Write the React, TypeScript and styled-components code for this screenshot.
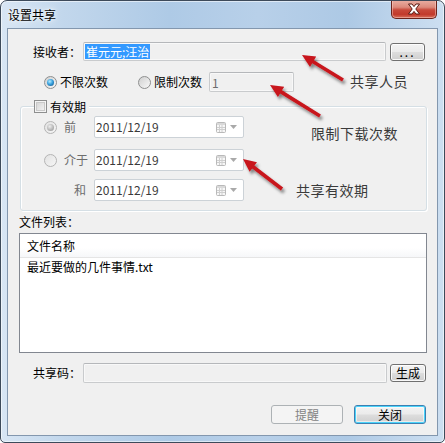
import React from "react";
import styled, { createGlobalStyle, css } from "styled-components";

const Global = createGlobalStyle`
  html, body { margin: 0; padding: 0; background: #ffffff; }
  body {
    font-family: "Noto Sans CJK SC", "Liberation Sans", sans-serif;
    font-size: 12px;
    color: #000;
  }
  * { box-sizing: border-box; }
`;

const Window = styled.div`
  position: relative;
  width: 445px;
  height: 443px;
  border: 1px solid #3d4a5a;
  border-radius: 7px 7px 5px 5px;
  background: linear-gradient(
    90deg,
    #d8e6f4 0%,
    #c2d7ec 14%,
    #aecae6 38%,
    #b8d0e9 58%,
    #adc9e5 78%,
    #cddff1 100%
  );
  box-shadow: inset 0 0 0 1px rgba(255, 255, 255, 0.55);
  padding: 0 6px 6px 6px;
  display: flex;
  flex-direction: column;
  overflow: hidden;
`;

const TitleBar = styled.div`
  height: 27px;
  flex-shrink: 0;
  display: flex;
  justify-content: space-between;
  align-items: flex-start;
`;

const TitleText = styled.span`
  margin: 7px 0 0 1px;
  font-size: 12px;
  line-height: 14px;
  color: #000;
  text-shadow: 0 0 6px rgba(255, 255, 255, 0.95), 0 0 3px rgba(255, 255, 255, 0.9);
`;

const CloseButton = styled.div`
  width: 46px;
  height: 19px;
  margin: -1px 1px 0 0;
  border: 1px solid #6b241c;
  border-top: none;
  border-radius: 0 0 5px 5px;
  background: linear-gradient(
    #eab0a4 0%,
    #dc8a7c 40%,
    #c8493a 55%,
    #c23a2b 80%,
    #d8705c 100%
  );
  box-shadow: inset 0 0 0 1px rgba(255, 220, 210, 0.45);
  display: flex;
  align-items: center;
  justify-content: center;
`;

const Client = styled.div`
  flex: 1;
  border: 1px solid #8397ae;
  background: #f0f0f0;
  display: flex;
  flex-direction: column;
`;

const FieldRow = styled.div<{ $mt: number; $pl: number }>`
  display: flex;
  align-items: center;
  margin-top: ${(p) => p.$mt}px;
  padding-left: ${(p) => p.$pl}px;
`;

const FieldLabel = styled.span`
  width: 50px;
  flex-shrink: 0;
  line-height: 14px;
`;

const TextBox = styled.div<{ $w: number; $h: number }>`
  width: ${(p) => p.$w}px;
  height: ${(p) => p.$h}px;
  flex-shrink: 0;
  border: 1px solid #c9cbcd;
  border-top-color: #b5b7ba;
  border-radius: 2px;
  background: #f0f0f0;
  display: flex;
  align-items: center;
  padding-left: 1px;
  color: #6d6d6d;
  line-height: 15px;
  box-shadow: inset 0 0 0 1px rgba(255, 255, 255, 0.5);
`;

const Selection = styled.span`
  background: #3399ff;
  color: #ffffff;
  padding: 0 1px 0 1px;
  line-height: 15px;
`;

const Btn = styled.button<{ $w: number; $h: number; $default?: boolean; $spaced?: boolean }>`
  width: ${(p) => p.$w}px;
  height: ${(p) => p.$h}px;
  flex-shrink: 0;
  padding: 0;
  font-family: inherit;
  font-size: 12px;
  line-height: 14px;
  letter-spacing: ${(p) => (p.$spaced ? "2px" : "0")};
  color: #000;
  border: 1px solid #707070;
  border-radius: 3px;
  background: linear-gradient(#f3f3f3 0%, #ebebeb 48%, #dddddd 52%, #cfcfcf 100%);
  box-shadow: inset 0 0 0 1px rgba(255, 255, 255, 0.85);
  display: flex;
  align-items: center;
  justify-content: center;
  ${(p) =>
    p.$default &&
    css`
      border-color: #3c7fb1;
      box-shadow: inset 0 0 0 1px #4ad3fa, inset 0 0 0 2px rgba(255, 255, 255, 0.55);
    `}
  &:disabled {
    border-color: #adb2b5;
    background: #f4f4f4;
    color: #838383;
    box-shadow: none;
  }
`;

const RadioItem = styled.label<{ $disabled?: boolean }>`
  display: flex;
  align-items: center;
  gap: 3px;
  line-height: 14px;
  color: ${(p) => (p.$disabled ? "#6d6d6d" : "#000")};
`;

const RadioDot = styled.span<{ $checked?: boolean; $disabled?: boolean }>`
  width: 13px;
  height: 13px;
  flex-shrink: 0;
  border-radius: 50%;
  border: 1px solid ${(p) => (p.$disabled ? "#b4b4b4" : "#8e8f8f")};
  background: ${(p) =>
    p.$disabled
      ? "linear-gradient(135deg, #e2e2e2, #f6f6f6)"
      : "linear-gradient(135deg, #cfcfcf, #f9f9f9)"};
  display: inline-flex;
  align-items: center;
  justify-content: center;
  &::after {
    content: "";
    width: 7px;
    height: 7px;
    border-radius: 50%;
    display: ${(p) => (p.$checked ? "block" : "none")};
    background: ${(p) =>
      p.$disabled
        ? "radial-gradient(circle at 40% 35%, #eeeeee 0%, #b8b8b8 55%, #8e8e8e 100%)"
        : "radial-gradient(circle at 40% 35%, #b5ecff 0%, #3aa2df 45%, #0b4a7e 100%)"};
  }
`;

const RadioRow = styled.div`
  display: flex;
  align-items: center;
  margin-top: 11px;
  padding-left: 36px;
  height: 20px;
`;

const Spacer = styled.span<{ $w: number }>`
  width: ${(p) => p.$w}px;
  flex-shrink: 0;
`;

const Group = styled.div`
  margin: 14px 0 0 12px;
  width: 407px;
  height: 105px;
  border: 1px solid #d5dfe5;
  border-radius: 3px;
  box-shadow: inset 1px 1px 0 #ffffff, 1px 1px 0 #ffffff;
  display: flex;
  flex-direction: column;
`;

const GroupLegend = styled.label`
  align-self: flex-start;
  margin: -7px 0 0 13px;
  height: 13px;
  padding-right: 3px;
  background: #f0f0f0;
  display: flex;
  align-items: center;
  gap: 3px;
  line-height: 14px;
`;

const CheckBox = styled.span`
  width: 13px;
  height: 13px;
  flex-shrink: 0;
  border: 1px solid #8e8f8f;
  background: #f4f4f4;
  box-shadow: inset 0 0 0 1px #f4f4f4, inset 0 0 0 2px #c9c9c9;
  background-image: linear-gradient(135deg, #d0d0d0, #f8f8f8);
  background-clip: content-box;
  padding: 2px;
`;

const DateRow = styled.div<{ $mt: number }>`
  display: flex;
  align-items: center;
  margin-top: ${(p) => p.$mt}px;
  padding-left: 23px;
`;

const DateLabel = styled.div<{ $right?: boolean }>`
  width: 50px;
  flex-shrink: 0;
  display: flex;
  align-items: center;
  justify-content: ${(p) => (p.$right ? "flex-end" : "flex-start")};
  padding-right: ${(p) => (p.$right ? 8 : 0)}px;
  color: #6d6d6d;
  line-height: 14px;
`;

const DateBox = styled.div`
  width: 150px;
  height: 22px;
  flex-shrink: 0;
  border: 1px solid #ccd2d7;
  border-radius: 2px;
  background: #ffffff;
  display: flex;
  align-items: center;
  justify-content: space-between;
  padding: 0 6px 0 1px;
  color: #3a3a3a;
  line-height: 14px;
`;

const DateButtons = styled.span`
  display: flex;
  align-items: center;
  gap: 4px;
`;

const ListLabel = styled.div`
  margin: 4px 0 0 11px;
  line-height: 14px;
`;

const ListBox = styled.div`
  margin: 4px 0 0 11px;
  width: 408px;
  height: 120px;
  border: 1px solid #828790;
  background: #ffffff;
  display: flex;
  flex-direction: column;
`;

const ListHeader = styled.div`
  height: 24px;
  flex-shrink: 0;
  border-bottom: 1px solid #e5e5e5;
  background: linear-gradient(#ffffff 0%, #ffffff 60%, #f6f7f9 100%);
  display: flex;
  align-items: center;
  padding-left: 7px;
  line-height: 14px;
`;

const ListItem = styled.div`
  height: 18px;
  display: flex;
  align-items: center;
  padding-left: 7px;
  line-height: 14px;
`;

const ButtonBar = styled.div`
  display: flex;
  justify-content: flex-end;
  gap: 11px;
  margin-top: 22px;
  padding-right: 11px;
`;

const Overlay = styled.svg`
  position: absolute;
  left: -1px;
  top: -1px;
  pointer-events: none;
`;

const Note = styled.span<{ $x: number; $y: number }>`
  position: absolute;
  left: ${(p) => p.$x - 1}px;
  top: ${(p) => p.$y - 1}px;
  font-size: 14px;
  line-height: 16px;
  letter-spacing: 0.5px;
  color: #3a3a3a;
  white-space: nowrap;
`;

function arrowPolygon(x1: number, y1: number, x2: number, y2: number) {
  const dx = x2 - x1;
  const dy = y2 - y1;
  const len = Math.hypot(dx, dy);
  const ux = dx / len;
  const uy = dy / len;
  const nx = -uy;
  const ny = ux;
  const headLen = 13;
  const headW = 6;
  const shaftW = 1.8;
  const bx = x2 - ux * headLen;
  const by = y2 - uy * headLen;
  const pts = [
    [x1 + nx * shaftW, y1 + ny * shaftW],
    [bx + nx * shaftW, by + ny * shaftW],
    [bx + nx * headW, by + ny * headW],
    [x2, y2],
    [bx - nx * headW, by - ny * headW],
    [bx - nx * shaftW, by - ny * shaftW],
    [x1 - nx * shaftW, y1 - ny * shaftW],
  ];
  return pts.map((p) => `${p[0].toFixed(1)},${p[1].toFixed(1)}`).join(" ");
}

const CalendarIcon = () => (
  <svg width="10" height="11" viewBox="0 0 10 11">
    <rect x="0.5" y="0.5" width="9" height="10" rx="1" fill="#f7f7f7" stroke="#b9b9b9" />
    <rect x="1" y="1" width="8" height="2" fill="#d9d9d9" />
    <path d="M1 5.5H9M1 7.5H9M3.5 3V10M6 3V10" stroke="#cfcfcf" strokeWidth="1" />
  </svg>
);

const DropArrow = () => (
  <svg width="7" height="4" viewBox="0 0 7 4">
    <path d="M0 0H7L3.5 4Z" fill="#a9a9a9" />
  </svg>
);

const CloseX = () => (
  <svg width="14" height="12" viewBox="0 0 14 12">
    <path
      d="M1.5 1H5L7 3.6L9 1H12.5L8.8 6L12.5 11H9L7 8.4L5 11H1.5L5.2 6Z"
      fill="#ffffff"
      stroke="#5a1a12"
      strokeWidth="1"
      strokeLinejoin="round"
    />
  </svg>
);

const DateField = ({ value }: { value: string }) => (
  <DateBox>
    <span>{value}</span>
    <DateButtons>
      <CalendarIcon />
      <DropArrow />
    </DateButtons>
  </DateBox>
);

const arrows = [
  { x1: 343, y1: 80, x2: 302, y2: 55 },
  { x1: 320, y1: 116, x2: 270, y2: 85 },
  { x1: 282, y1: 189, x2: 243, y2: 159 },
];

export default function App() {
  return (
    <>
      <Global />
      <Window>
        <TitleBar>
          <TitleText>设置共享</TitleText>
          <CloseButton>
            <CloseX />
          </CloseButton>
        </TitleBar>
        <Client>
          <FieldRow $mt={13} $pl={25}>
            <FieldLabel>接收者：</FieldLabel>
            <TextBox $w={303} $h={19}>
              <Selection>崔元元;汪治</Selection>
            </TextBox>
            <Spacer $w={4} />
            <Btn $w={35} $h={18} $spaced>...</Btn>
          </FieldRow>

          <RadioRow>
            <RadioItem>
              <RadioDot $checked />
              不限次数
            </RadioItem>
            <Spacer $w={30} />
            <RadioItem>
              <RadioDot />
              限制次数
            </RadioItem>
            <Spacer $w={7} />
            <TextBox $w={85} $h={20}>
              <Spacer $w={1} />1
            </TextBox>
          </RadioRow>

          <Group>
            <GroupLegend>
              <CheckBox />
              有效期
            </GroupLegend>
            <DateRow $mt={3}>
              <DateLabel>
                <RadioItem $disabled>
                  <RadioDot $checked $disabled />
                  <Spacer $w={1} />前
                </RadioItem>
              </DateLabel>
              <DateField value="2011/12/19" />
            </DateRow>
            <DateRow $mt={11}>
              <DateLabel>
                <RadioItem $disabled>
                  <RadioDot $disabled />
                  <Spacer $w={1} />介于
                </RadioItem>
              </DateLabel>
              <DateField value="2011/12/19" />
            </DateRow>
            <DateRow $mt={8}>
              <DateLabel $right>和</DateLabel>
              <DateField value="2011/12/19" />
            </DateRow>
          </Group>

          <ListLabel>文件列表：</ListLabel>
          <ListBox>
            <ListHeader>文件名称</ListHeader>
            <ListItem>最近要做的几件事情.txt</ListItem>
          </ListBox>

          <FieldRow $mt={10} $pl={25}>
            <FieldLabel>共享码：</FieldLabel>
            <TextBox $w={304} $h={20} />
            <Spacer $w={3} />
            <Btn $w={36} $h={18}>生成</Btn>
          </FieldRow>

          <ButtonBar>
            <Btn $w={72} $h={19} disabled>
              提醒
            </Btn>
            <Btn $w={72} $h={19} $default>
              关闭
            </Btn>
          </ButtonBar>
        </Client>

        <Overlay width="445" height="443" viewBox="0 0 445 443">
          <defs>
            <filter id="shadow" x="-20%" y="-20%" width="160%" height="160%">
              <feDropShadow dx="2" dy="3" stdDeviation="1.6" floodColor="#000" floodOpacity="0.45" />
            </filter>
          </defs>
          {arrows.map((a, i) => (
            <polygon
              key={i}
              points={arrowPolygon(a.x1, a.y1, a.x2, a.y2)}
              fill="#c8141b"
              filter="url(#shadow)"
            />
          ))}
        </Overlay>
        <Note $x={350} $y={73}>共享人员</Note>
        <Note $x={311} $y={125}>限制下载次数</Note>
        <Note $x={296} $y={182}>共享有效期</Note>
      </Window>
    </>
  );
}
